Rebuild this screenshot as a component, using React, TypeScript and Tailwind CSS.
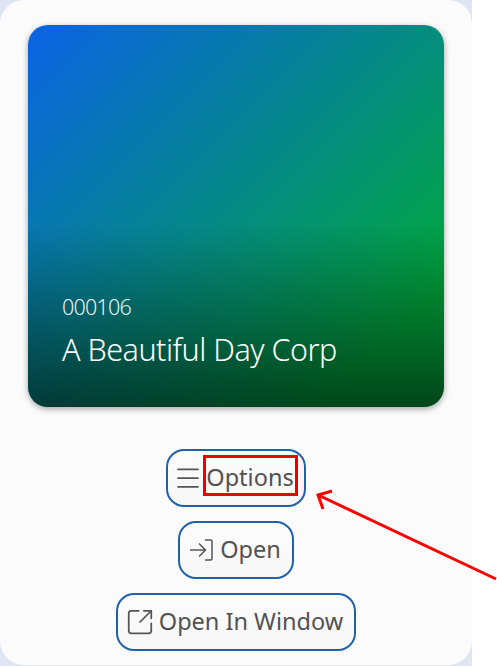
import { Menu, SquareArrowOutUpRight } from 'lucide-react'
import type { ReactNode } from 'react'

function LoginIcon() {
  return (
    <svg viewBox="0 0 24 24" className="w-[24px] h-[24px]" fill="none" stroke="#555555" strokeWidth="1.5">
      <path d="M16 2h5.5a1.5 1.5 0 0 1 1.5 1.5v17a1.5 1.5 0 0 1-1.5 1.5H16" />
      <path d="M1 12h15.5M10 5.5l6.5 6.5-6.5 6.5" />
    </svg>
  )
}

function ActionButton({ icon, className, children }: { icon: ReactNode; className: string; children: ReactNode }) {
  return (
    <button className={`h-[58px] flex items-center rounded-[18px] border-[2px] border-[#1f62ab] bg-gradient-to-b from-[#fcfcfc] to-[#f7f7f7] text-[#525252] text-[23.5px] ${className}`}>
      {icon}
      {children}
    </button>
  )
}

export default function App() {
  return (
    <div className="relative w-[497px] h-[667px] bg-white overflow-hidden font-['Noto_Sans',sans-serif]">
      <div className="w-[472px] h-[666px] bg-[#dfe5f2]">
        <div className="h-[665px] rounded-[24px] bg-[#fbfbfb] px-[28px] pt-[25px] flex flex-col items-center">
          {/* Card */}
          <div className="relative w-[416px] h-[382px] shrink-0 rounded-[20px] overflow-hidden shadow-[0_2px_6px_rgba(0,0,0,0.35)] bg-[linear-gradient(135deg,#0b62e6_0%,#00a83c_85%,#00a83c_100%)]">
            <div className="absolute inset-0 bg-[linear-gradient(to_bottom,rgba(0,0,0,0)_52%,rgba(0,0,0,0.58)_100%)]" />
            <div className="relative h-full flex flex-col justify-end px-[34px] pb-[38px] text-white">
              <div className="text-[21.5px] leading-[28px] font-light tracking-[-0.8px] text-[#e6f2ee]">000106</div>
              <div className="mt-[8px] text-[30.5px] leading-[40px] font-light tracking-[-0.5px]">A Beautiful Day Corp</div>
            </div>
          </div>

          {/* Actions */}
          <div className="mt-[42px] flex flex-col items-center gap-[14px]">
            <ActionButton className="pl-[5px] pr-[10px] gap-[3px]" icon={<Menu className="w-[30px] h-[30px] text-[#555555]" strokeWidth={1.4} />}>Options</ActionButton>
            <ActionButton className="pl-[9px] pr-[11px] gap-[7px]" icon={<LoginIcon />}>Open</ActionButton>
            <ActionButton className="pl-[7px] pr-[11px] gap-[4px]" icon={<SquareArrowOutUpRight className="w-[30px] h-[30px] text-[#555555]" strokeWidth={1.4} />}>Open In Window</ActionButton>
          </div>
        </div>
      </div>

      {/* Annotation box over the Options label */}
      <div className="absolute left-[203px] top-[455px] w-[95px] h-[41px] border-[3px] border-[#ee0000]" />

      {/* Annotation arrow */}
      <svg className="absolute inset-0 w-[497px] h-[667px] pointer-events-none" viewBox="0 0 497 667" fill="none" stroke="#ff0000" strokeWidth="3">
        <path d="M496 579L318 495M332 491L318 495L323 509" />
      </svg>
    </div>
  )
}
